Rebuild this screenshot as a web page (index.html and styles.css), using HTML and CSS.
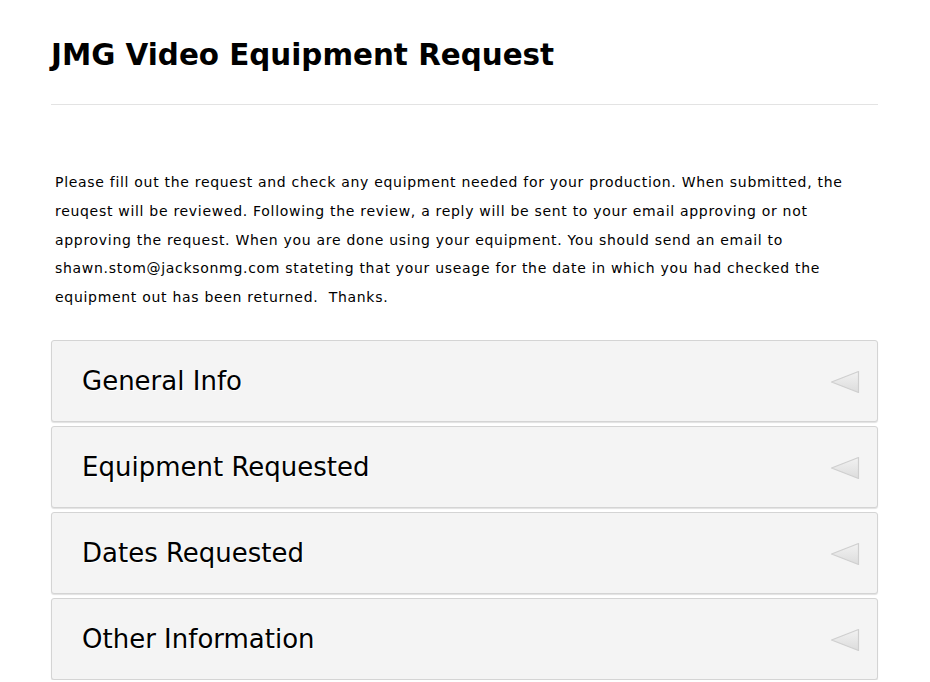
FILE: index.html
```html
<!DOCTYPE html>
<html lang="en">
<head>
    <meta charset="UTF-8">
    <meta name="viewport" content="width=device-width, initial-scale=1.0">
    <title>JMG Video Equipment Request</title>
    <link rel="stylesheet" href="styles.css">
</head>
<body>
    <div class="container">
        <h1>JMG Video Equipment Request</h1>
        <p class="intro">Please fill out the request and check any equipment needed for your production. When submitted, the reuqest will be reviewed. Following the review, a reply will be sent to your email approving or not approving the request. When you are done using your equipment. You should send an email to shawn.stom@jacksonmg.com stateting that your useage for the date in which you had checked the equipment out has been returned.&nbsp; Thanks.</p>
        <div class="sections">
            <div class="section">
                <div class="section-title">General Info</div>
                <svg class="arrow" width="30" height="24" viewBox="0 0 30 24"><defs><linearGradient id="g1" x1="0" y1="0" x2="0" y2="1"><stop offset="0" stop-color="#f2f2f2"/><stop offset="1" stop-color="#dcdcdc"/></linearGradient></defs><polygon points="1.5,12 28.5,1.5 28.5,22.5" fill="url(#g1)" stroke="#cfcfcf" stroke-width="1.2" stroke-linejoin="round"/></svg>
            </div>
            <div class="section">
                <div class="section-title">Equipment Requested</div>
                <svg class="arrow" width="30" height="24" viewBox="0 0 30 24"><polygon points="1.5,12 28.5,1.5 28.5,22.5" fill="url(#g1)" stroke="#cfcfcf" stroke-width="1.2" stroke-linejoin="round"/></svg>
            </div>
            <div class="section">
                <div class="section-title">Dates Requested</div>
                <svg class="arrow" width="30" height="24" viewBox="0 0 30 24"><polygon points="1.5,12 28.5,1.5 28.5,22.5" fill="url(#g1)" stroke="#cfcfcf" stroke-width="1.2" stroke-linejoin="round"/></svg>
            </div>
            <div class="section">
                <div class="section-title">Other Information</div>
                <svg class="arrow" width="30" height="24" viewBox="0 0 30 24"><polygon points="1.5,12 28.5,1.5 28.5,22.5" fill="url(#g1)" stroke="#cfcfcf" stroke-width="1.2" stroke-linejoin="round"/></svg>
            </div>
        </div>
    </div>
</body>
</html>
```

FILE: styles.css
```css
body {
    margin: 0;
    background-color: #fff;
    font-family: "DejaVu Sans", Verdana, sans-serif;
    color: #000;
}
.container {
    padding: 0 52px 0 51px;
}
h1 {
    margin: 0;
    padding: 38px 0 32px 0;
    font-size: 29.4px;
    font-weight: bold;
    border-bottom: 1px solid #e3e3e3;
}
.intro {
    margin: 63px 0 0 4px;
    font-size: 14px;
    letter-spacing: 0.7px;
    line-height: 28.8px;
}
.sections {
    margin-top: 28px;
    display: flex;
    flex-direction: column;
    gap: 4px;
}
.section {
    display: flex;
    align-items: center;
    justify-content: space-between;
    height: 80px;
    background-color: #f4f4f4;
    border: 1px solid #d4d4d4;
    border-radius: 3px;
    box-shadow: 0 1px 1px rgba(0,0,0,0.12);
    padding: 0 17px 0 30px;
}
.section-title {
    font-size: 26px;
    text-shadow: 1px 1px 0 #fff;
}
.arrow {
    display: block;
    margin-top: 2px;
}
```
